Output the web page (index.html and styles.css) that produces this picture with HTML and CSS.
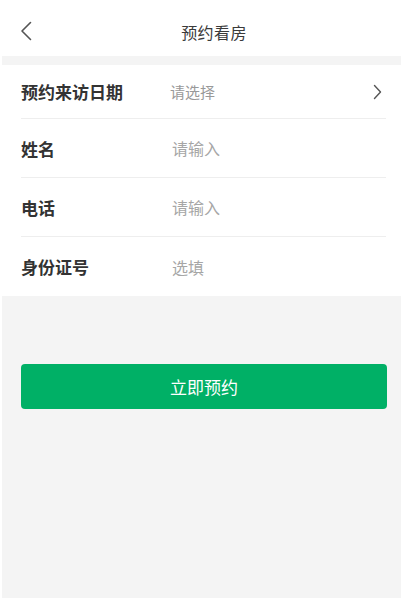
FILE: index.html
```html
<!DOCTYPE html>
<html lang="zh-CN">
<head>
<meta charset="utf-8">
<title>预约看房</title>
<link rel="stylesheet" href="styles.css">
</head>
<body>
<div class="page">
  <header class="navbar">
    <span class="back">
      <svg width="12" height="20" viewBox="0 0 12 20"><path d="M10.5 1.5 L2 10 L10.5 18.5" fill="none" stroke="#555" stroke-width="1.6" stroke-linecap="round" stroke-linejoin="round"/></svg>
    </span>
    <h1 class="title">预约看房</h1>
  </header>
  <div class="gap"></div>
  <form class="form">
    <div class="row first">
      <span class="label">预约来访日期</span>
      <span class="picker">请选择</span>
      <svg class="arrow" width="9" height="16" viewBox="0 0 9 16"><path d="M1.5 1.5 L7.5 8 L1.5 14.5" fill="none" stroke="#555" stroke-width="1.4" stroke-linecap="round" stroke-linejoin="round"/></svg>
    </div>
    <div class="row">
      <span class="label">姓名</span>
      <input class="field" type="text" placeholder="请输入">
    </div>
    <div class="row">
      <span class="label">电话</span>
      <input class="field" type="tel" placeholder="请输入">
    </div>
    <div class="row last">
      <span class="label">身份证号</span>
      <input class="field" type="text" placeholder="选填">
    </div>
  </form>
  <div class="actions">
    <button class="submit" type="button">立即预约</button>
  </div>
</div>
</body>
</html>
```
FILE: styles.css
```css
html, body {
  margin: 0;
  padding: 0;
  height: 100%;
  background: #ffffff;
}
body {
  font-family: "Noto Sans CJK SC", "Noto Sans", sans-serif;
  color: #333;
}
.page {
  margin: 0 1px 2px 2px;
  min-height: 598px;
  background: #f4f4f4;
  box-sizing: border-box;
}
.navbar {
  height: 56px;
  background: #fff;
  display: flex;
  align-items: center;
  justify-content: center;
  position: relative;
  margin: 0 -1px 0 -2px;
}
.back {
  position: absolute;
  left: 20px;
  top: 21px;
  display: flex;
}
.title {
  margin: 0;
  font-size: 16px;
  letter-spacing: 0.4px;
  font-weight: 400;
  color: #3a3a3a;
  line-height: 22px;
  padding-top: 7px;
  padding-left: 26px;
}
.gap {
  height: 9px;
}
.form {
  background: #fff;
  padding: 0 15px 0 19px;
  margin: 0;
}
.row {
  display: flex;
  align-items: center;
  height: 59px;
  border-bottom: 1px solid #eeeeee;
  box-sizing: border-box;
}
.row.first {
  height: 54px;
}
.row.last {
  border-bottom: none;
}
.label {
  width: 149px;
  flex: none;
  font-size: 17px;
  font-weight: 700;
  color: #333;
}
.picker {
  flex: 1;
  font-size: 15px;
  color: #999;
}
.arrow {
  flex: none;
  margin-right: 4px;
}
.field {
  flex: 1;
  border: none;
  outline: none;
  padding: 0 0 0 2px;
  font-family: inherit;
  font-size: 16px;
  color: #333;
  background: transparent;
}
.field::placeholder {
  color: #a6a6a6;
}
.actions {
  padding: 68px 14px 0 19px;
}
.submit {
  width: 100%;
  height: 45px;
  border: none;
  border-radius: 4px;
  background: #00b066;
  color: #fff;
  font-family: inherit;
  font-size: 17px;
  display: block;
}
```
